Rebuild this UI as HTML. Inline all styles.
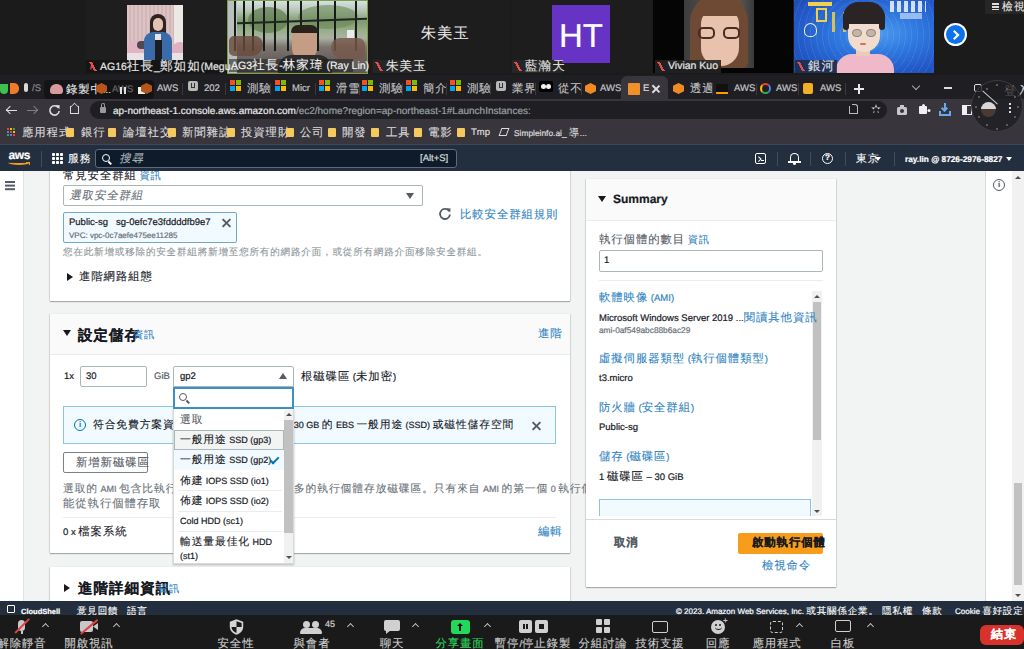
<!DOCTYPE html>
<html><head><meta charset="utf-8">
<style>
*{box-sizing:border-box;margin:0;padding:0}
html,body{text-rendering:geometricPrecision;-webkit-text-stroke:.2px currentColor;width:1024px;height:649px;overflow:hidden;background:#f2f3f3;font-family:"Liberation Sans",sans-serif;color:#16191f}
.a{position:absolute;white-space:nowrap}
.c{font-size:1.2em;letter-spacing:.08em;-webkit-text-stroke:.1px currentColor}
.lnk{color:#2f84c2}
.xx{position:absolute}.xx:before,.xx:after{content:"";position:absolute;left:50%;top:50%;width:100%;height:2px;margin-left:-50%;margin-top:-1px;background:currentColor;transform:rotate(45deg)}.xx:after{transform:rotate(-45deg)}
.card{position:absolute;background:#fff;box-shadow:0 1px 1px 0 rgba(0,0,0,.28),1px 0 1px 0 rgba(0,0,0,.08),-1px 0 1px 0 rgba(0,0,0,.08)}
.t9{font-size:9.5px;line-height:12px}
.t8{font-size:8.5px;line-height:11px}
#zoomtop{left:0;top:0;width:1024px;height:75px;background:#1b1b1b}
#tabs{left:0;top:75px;width:1024px;height:24px;background:#1f1e22}
#toolbar{left:0;top:99px;width:1024px;height:45px;background:#38353c}
#awsnav{left:0;top:144px;width:1024px;height:27px;background:#232f3e;border-top:1px solid #3f4757}
#awsfoot{left:0;top:601px;width:1024px;height:14px;background:#232f3e;overflow:hidden}
#zoombar{left:0;top:615px;width:1024px;height:34px;background:#1a1a1a}
</style></head><body>

<div id="zoomtop" class="a">
 <!-- tile2 -->
 <div class="a" style="left:86px;top:0;width:140px;height:73px;background:#1e1e1e"></div>
 <div class="a" style="left:127px;top:5px;width:56px;height:55px;background:repeating-linear-gradient(90deg,#dcc4c5 0 2px,#d2b6b8 2px 4px);overflow:hidden">
   <div class="a" style="left:47px;top:0;width:9px;height:55px;background:#ece8e4"></div>
   <div class="a" style="left:0;top:35px;width:22px;height:16px;border-radius:10px 8px 4px 4px;background:#e2b3c3"></div>
   <div class="a" style="left:45px;top:37px;width:12px;height:15px;border-radius:8px 4px 4px 4px;background:#dfb0bf"></div>
   <div class="a" style="left:10px;top:36px;width:12px;height:8px;border-radius:6px;background:#4a4a52"></div>
   <div class="a" style="left:0;top:48px;width:56px;height:7px;background:#e6e2e6"></div>
   <div class="a" style="left:23px;top:9px;width:16px;height:22px;border-radius:8px 8px 3px 3px;background:#2e2422"></div>
   <div class="a" style="left:26px;top:13px;width:10px;height:13px;border-radius:5px 5px 5px 5px;background:#e5c2b2"></div>
   <div class="a" style="left:17px;top:27px;width:28px;height:28px;border-radius:9px 9px 0 0;background:#3a6cab"></div>
   <div class="a" style="left:28px;top:29px;width:6px;height:6px;background:#e9e4e4"></div>
   <div class="a" style="left:28px;top:35px;width:7px;height:20px;background:#1c1c24"></div>
 </div>
 <div class="a" style="left:86px;top:60px;width:138px;height:13px;background:rgba(20,20,20,.85)"></div>
 <!-- tile3 -->
 <div class="a" style="left:227px;top:0;width:141px;height:74px;border:1.5px solid #7e9f4a;background:#555;overflow:hidden">
   <div class="a" style="left:0;top:0;width:141px;height:74px;background:linear-gradient(180deg,#d6e0e4 0%,#b9c8b8 12%,#7f9a70 28%,#9aae8a 40%,#a9b2a4 50%,#7d7470 62%,#6a625e 78%,#5a5654 100%)"></div>
   <div class="a" style="left:20px;top:6px;width:40px;height:26px;border-radius:50%;background:#5f7c4e;opacity:.7"></div>
   <div class="a" style="left:70px;top:4px;width:60px;height:24px;border-radius:50%;background:#6c8a58;opacity:.6"></div>
   <div class="a" style="left:0;top:0;width:9px;height:74px;background:#b8bfbc"></div>
   <div class="a" style="left:6px;top:0;width:1.5px;height:50px;background:#161b18;box-shadow:9px 0 0 #161b18,18px 0 0 #161b18,29px 0 0 #161b18,40px 0 0 #161b18,53px 0 0 #161b18,66px 0 0 #161b18,83px 0 0 #161b18,100px 0 0 #161b18,121px 0 0 #161b18"></div>
   <div class="a" style="left:9px;top:19px;width:132px;height:1.5px;background:#1f2622;transform:rotate(-2deg)"></div>
   <div class="a" style="left:1px;top:35px;width:34px;height:20px;border-radius:6px 10px 14px 6px;background:#6a4a3c;opacity:.8"></div>
   <div class="a" style="left:103px;top:37px;width:34px;height:21px;border-radius:10px 8px 6px 14px;background:#77584a;opacity:.8"></div>
   <div class="a" style="left:119px;top:29px;width:7px;height:8px;background:#e8ece8"></div>
   <div class="a" style="left:64px;top:26px;width:25px;height:32px;border-radius:11px 11px 10px 10px;background:#c59c84"></div>
   <div class="a" style="left:63px;top:24px;width:27px;height:8px;border-radius:12px 12px 2px 2px;background:#2a201c"></div>
   <div class="a" style="left:50px;top:54px;width:54px;height:22px;border-radius:14px 14px 0 0;background:#2e2b2b"></div>
 </div>
 <div class="a" style="left:229px;top:59px;width:124px;height:13px;background:rgba(30,30,30,.55)"></div>
 <!-- tile4 -->
 <div class="a" style="left:371px;top:0;width:139px;height:73px;background:#1d1d1d"></div>
 <div class="a" style="left:421px;top:25px;font-size:12.5px;color:#e8e8e8"><span class="c">朱美玉</span></div>
 <div class="a" style="left:373px;top:60px;width:50px;height:13px;background:#262626"></div>
 <!-- tile5 -->
 <div class="a" style="left:512px;top:0;width:140px;height:73px;background:#1d1d1d"></div>
 <div class="a" style="left:552px;top:5px;width:58px;height:58px;background:#6633c4"></div>
 <div class="a" style="left:559px;top:19px;font-size:33px;line-height:34px;color:#fff">HT</div>
 <div class="a" style="left:512px;top:60px;width:50px;height:13px;background:#262626"></div>
 <!-- tile6 -->
 <div class="a" style="left:653px;top:0;width:140px;height:73px;background:#050505"></div>
 <div class="a" style="left:684px;top:0;width:70px;height:68px;background:linear-gradient(90deg,#3c3c3c,#626262 70%,#3a3a3a);overflow:hidden">
   <div class="a" style="left:6px;top:-6px;width:58px;height:74px;border-radius:28px 28px 6px 6px;background:#6e4a34"></div>
   <div class="a" style="left:17px;top:8px;width:38px;height:58px;border-radius:16px 16px 18px 18px;background:#e9c2ad"></div>
   <div class="a" style="left:12px;top:0px;width:48px;height:16px;border-radius:20px 20px 6px 18px;background:#6e4a34"></div>
   <div class="a" style="left:14px;top:27px;width:17px;height:12px;border:2px solid #4a2d22;border-radius:5px"></div>
   <div class="a" style="left:39px;top:27px;width:17px;height:12px;border:2px solid #4a2d22;border-radius:5px"></div>
 </div>
 <div class="a" style="left:655px;top:60px;width:66px;height:13px;background:rgba(35,35,35,.9)"></div>
 <!-- tile7 -->
 <div class="a" style="left:794px;top:0;width:140px;height:73px;background:radial-gradient(ellipse at 60% 45%,#4c9bf0 0%,#2f78e0 35%,#2259c8 70%,#1c46a8 100%);overflow:hidden">
   <div class="a" style="left:-20px;top:-30px;width:180px;height:130px;border-radius:50%;background:repeating-radial-gradient(circle at 50% 50%,rgba(255,255,255,0) 0 5px,rgba(255,255,255,.08) 5px 6px)"></div>
   <div class="a" style="left:14px;top:2px;width:24px;height:4px;background:#f0d24a"></div>
   <div class="a" style="left:22px;top:8px;width:11px;height:14px;border:2.5px solid #f0d24a"></div>
   <div class="a" style="left:38px;top:12px;width:14px;height:20px;border-left:3px solid #e8cc48;border-right:3px solid #e8cc48;opacity:.9"></div>
   <div class="a" style="left:10px;top:23px;width:13px;height:14px;border:1.5px solid #e8ecd0;border-radius:50% 50% 40% 40%"></div>
   <div class="a" style="left:96px;top:1px;width:36px;height:11px;opacity:.85;background:repeating-linear-gradient(90deg,#f0f4ff 0 4px,transparent 4px 7px)"></div>
   <div class="a" style="left:106px;top:13px;width:22px;height:6px;background:#c8d8f8;opacity:.7"></div>
   <div class="a" style="left:42px;top:54px;width:58px;height:22px;border-radius:16px 16px 0 0;background:#f0b9c9"></div>
   <div class="a" style="left:62px;top:48px;width:14px;height:8px;background:#ecc9b8"></div>
   <div class="a" style="left:54px;top:14px;width:32px;height:38px;border-radius:14px 14px 16px 16px;background:#f2dccd"></div>
   <div class="a" style="left:49px;top:2px;width:42px;height:22px;border-radius:20px 20px 8px 8px;background:#2a2424"></div>
   <div class="a" style="left:49px;top:14px;width:6px;height:16px;border-radius:0 0 4px 4px;background:#2a2424"></div>
   <div class="a" style="left:85px;top:14px;width:6px;height:16px;border-radius:0 0 4px 4px;background:#2a2424"></div>
   <div class="a" style="left:58px;top:29px;width:10px;height:8px;border:1px solid #8a8a8a;border-radius:4px;background:rgba(120,100,90,.35)"></div>
   <div class="a" style="left:72px;top:29px;width:10px;height:8px;border:1px solid #8a8a8a;border-radius:4px;background:rgba(120,100,90,.35)"></div>
   <div class="a" style="left:66px;top:43px;width:6px;height:2px;border-radius:1px;background:#d0706a"></div>
 </div>
 <div class="a" style="left:795px;top:60px;width:42px;height:13px;background:rgba(30,40,60,.8)"></div>
 <!-- arrow -->
 <div class="a" style="left:944px;top:23px;width:23px;height:23px;border-radius:50%;background:#fff"></div>
 <div class="a" style="left:946px;top:25px;width:19px;height:19px;border-radius:50%;background:#0e72ed"></div>
 <div class="a" style="left:951px;top:30px;width:7px;height:7px;border-right:2px solid #fff;border-top:2px solid #fff;transform:translate(0px,1.5px) rotate(45deg)"></div>
 <!-- view -->
 <div class="a" style="left:985px;top:0;width:39px;height:14px;background:#262626"></div>
 <div class="a" style="left:992px;top:3px;width:7px;height:7px;background:repeating-linear-gradient(180deg,#ddd 0 2px,transparent 2px 3px)"></div>
 <div class="a" style="left:1002px;top:1px;font-size:9px;line-height:12px;color:#e8e8e8"><span class="c">檢視</span></div>
 <!-- name labels -->
 <div class="a" style="left:90px;top:62px;width:6px;height:9px;color:#e04848;font-size:9px;line-height:9px;font-weight:bold">/</div>
 <div class="a" style="left:100px;top:60px;font-size:10.5px;line-height:13px;color:#e6e6e6">AG16<span class="c">社長</span>_<span class="c">鄭如如</span>(Megu...</div>
 <div class="a" style="left:231px;top:59px;font-size:10.5px;line-height:13px;color:#f0f0f0">AG3<span class="c">社長</span>-<span class="c">林家瑋</span> (Ray Lin)</div>
 <div class="a" style="left:386px;top:60px;font-size:10.5px;line-height:13px;color:#e6e6e6"><span class="c">朱美玉</span></div>
 <div class="a" style="left:525px;top:60px;font-size:10.5px;line-height:13px;color:#e6e6e6"><span class="c">藍瀚天</span></div>
 <div class="a" style="left:668px;top:60px;font-size:10.5px;line-height:13px;color:#e6e6e6">Vivian Kuo</div>
 <div class="a" style="left:808px;top:60px;font-size:10.5px;line-height:13px;color:#e6e6e6"><span class="c">銀河</span></div>
 <div class="a" style="left:89px;top:62px;width:8px;height:9px;background:linear-gradient(60deg,transparent 40%,#e05050 40% 60%,transparent 60%)"></div>
 <div class="a" style="left:375px;top:62px;width:8px;height:9px;background:linear-gradient(60deg,transparent 40%,#e05050 40% 60%,transparent 60%)"></div>
 <div class="a" style="left:514px;top:62px;width:8px;height:9px;background:linear-gradient(60deg,transparent 40%,#e05050 40% 60%,transparent 60%)"></div>
 <div class="a" style="left:657px;top:62px;width:8px;height:9px;background:linear-gradient(60deg,transparent 40%,#e05050 40% 60%,transparent 60%)"></div>
 <div class="a" style="left:797px;top:62px;width:8px;height:9px;background:linear-gradient(60deg,transparent 40%,#e05050 40% 60%,transparent 60%)"></div>
</div>

<div id="tabs" class="a"></div>
<div class="a" style="left:0px;top:84px;width:8px;height:10px;background:#3fc14f;border-radius:0 0 5px 5px"></div>
<div class="a" style="left:10px;top:83px;width:9px;height:11px;background:#ee7a2a;border-radius:0 5px 5px 0"></div>
<div class="a" style="left:24px;top:83px;width:4px;height:9px;background:#d8d8d8;border-radius:2px"></div>
<div class="a" style="left:32px;top:83px;font-size:9.5px;line-height:12px;color:#888">/S</div>
<div class="a" style="left:44px;top:80px;width:110px;height:19px;background:#141416;border-radius:4px"></div>
<div class="a" style="left:50px;top:84px;width:13px;height:10px;background:#d89a9a;border-radius:6px 6px 3px 3px"></div>
<div class="a" style="left:66px;top:84px;font-size:9.5px;line-height:12px;color:#e6e6e6"><span class="c">錄製中</span>...</div>
<div class="a" style="left:96px;top:83px;width:11px;height:11px;background:#b5561c;clip-path:polygon(50% 0,100% 25%,100% 75%,50% 100%,0 75%,0 25%)"></div>
<div class="a" style="left:112px;top:84px;font-size:9.5px;line-height:12px;color:#666">AWS</div>
<div class="a" style="left:120px;top:87px;width:2px;height:7px;background:#e0e0e0;box-shadow:4px 0 0 #e0e0e0"></div>
<div class="a" style="left:138px;top:87px;width:7px;height:7px;background:#f0f0f0"></div>
<div class="a" style="left:141px;top:83px;width:11px;height:11px;background:#b5561c;clip-path:polygon(50% 0,100% 25%,100% 75%,50% 100%,0 75%,0 25%)"></div>
<div class="a" style="left:157px;top:83px;font-size:9.5px;line-height:12px;color:#c4c4c8">AWS</div>
<div class="a" style="left:182px;top:83px;width:1px;height:12px;background:#3a393e"></div>
<div class="a" style="left:188px;top:81px;width:10px;height:10px;background:#b8b8b8;border-radius:2px"></div><div class="a" style="left:191px;top:83px;width:4px;height:5px;border:1.3px solid #333;border-top:0"></div>
<div class="a" style="left:204px;top:83px;font-size:9.5px;line-height:12px;color:#c4c4c8">202</div>
<div class="a" style="left:225px;top:83px;width:1px;height:12px;background:#3a393e"></div>
<div class="a" style="left:230px;top:80px;width:11px;height:11px;background:linear-gradient(90deg,transparent 5px,#1f1e22 5px 6px,transparent 6px),linear-gradient(0deg,transparent 5px,#1f1e22 5px 6px,transparent 6px),linear-gradient(90deg,#f25022 50%,#7fba00 50%) top/100% 50% no-repeat,linear-gradient(90deg,#00a4ef 50%,#ffb900 50%) bottom/100% 50% no-repeat"></div>
<div class="a" style="left:247px;top:83px;font-size:9.5px;line-height:12px;color:#c4c4c8"><span class="c">測驗</span></div>
<div class="a" style="left:270px;top:83px;width:1px;height:12px;background:#3a393e"></div>
<div class="a" style="left:275px;top:80px;width:11px;height:11px;background:linear-gradient(90deg,transparent 5px,#1f1e22 5px 6px,transparent 6px),linear-gradient(0deg,transparent 5px,#1f1e22 5px 6px,transparent 6px),linear-gradient(90deg,#f25022 50%,#7fba00 50%) top/100% 50% no-repeat,linear-gradient(90deg,#00a4ef 50%,#ffb900 50%) bottom/100% 50% no-repeat"></div>
<div class="a" style="left:292px;top:83px;font-size:9.5px;line-height:12px;color:#c4c4c8">Micr</div>
<div class="a" style="left:315px;top:83px;width:1px;height:12px;background:#3a393e"></div>
<div class="a" style="left:319px;top:80px;width:11px;height:11px;background:linear-gradient(90deg,transparent 5px,#1f1e22 5px 6px,transparent 6px),linear-gradient(0deg,transparent 5px,#1f1e22 5px 6px,transparent 6px),linear-gradient(90deg,#f25022 50%,#7fba00 50%) top/100% 50% no-repeat,linear-gradient(90deg,#00a4ef 50%,#ffb900 50%) bottom/100% 50% no-repeat"></div>
<div class="a" style="left:336px;top:83px;font-size:9.5px;line-height:12px;color:#c4c4c8"><span class="c">滑雪</span></div>
<div class="a" style="left:359px;top:83px;width:1px;height:12px;background:#3a393e"></div>
<div class="a" style="left:362px;top:80px;width:11px;height:11px;background:linear-gradient(90deg,transparent 5px,#1f1e22 5px 6px,transparent 6px),linear-gradient(0deg,transparent 5px,#1f1e22 5px 6px,transparent 6px),linear-gradient(90deg,#f25022 50%,#7fba00 50%) top/100% 50% no-repeat,linear-gradient(90deg,#00a4ef 50%,#ffb900 50%) bottom/100% 50% no-repeat"></div>
<div class="a" style="left:379px;top:83px;font-size:9.5px;line-height:12px;color:#c4c4c8"><span class="c">測驗</span></div>
<div class="a" style="left:402px;top:83px;width:1px;height:12px;background:#3a393e"></div>
<div class="a" style="left:406px;top:80px;width:11px;height:11px;background:linear-gradient(90deg,transparent 5px,#1f1e22 5px 6px,transparent 6px),linear-gradient(0deg,transparent 5px,#1f1e22 5px 6px,transparent 6px),linear-gradient(90deg,#f25022 50%,#7fba00 50%) top/100% 50% no-repeat,linear-gradient(90deg,#00a4ef 50%,#ffb900 50%) bottom/100% 50% no-repeat"></div>
<div class="a" style="left:423px;top:83px;font-size:9.5px;line-height:12px;color:#c4c4c8"><span class="c">簡介</span></div>
<div class="a" style="left:446px;top:83px;width:1px;height:12px;background:#3a393e"></div>
<div class="a" style="left:450px;top:80px;width:11px;height:11px;background:linear-gradient(90deg,transparent 5px,#1f1e22 5px 6px,transparent 6px),linear-gradient(0deg,transparent 5px,#1f1e22 5px 6px,transparent 6px),linear-gradient(90deg,#f25022 50%,#7fba00 50%) top/100% 50% no-repeat,linear-gradient(90deg,#00a4ef 50%,#ffb900 50%) bottom/100% 50% no-repeat"></div>
<div class="a" style="left:467px;top:83px;font-size:9.5px;line-height:12px;color:#c4c4c8"><span class="c">測驗</span></div>
<div class="a" style="left:490px;top:83px;width:1px;height:12px;background:#3a393e"></div>
<div class="a" style="left:496px;top:81px;width:10px;height:10px;background:#b8b8b8;border-radius:2px"></div><div class="a" style="left:499px;top:83px;width:4px;height:5px;border:1.3px solid #333;border-top:0"></div>
<div class="a" style="left:512px;top:83px;font-size:9.5px;line-height:12px;color:#c4c4c8"><span class="c">業界</span></div>
<div class="a" style="left:535px;top:83px;width:1px;height:12px;background:#3a393e"></div>
<div class="a" style="left:539px;top:81px;width:14px;height:11px;background:#000;border-radius:2px"></div><div class="a" style="left:541px;top:84px;width:5px;height:5px;border-radius:50%;background:#f4f4f4;box-shadow:5px 0 0 #f4f4f4"></div>
<div class="a" style="left:558px;top:83px;font-size:9.5px;line-height:12px;color:#c4c4c8"><span class="c">從不</span></div>
<div class="a" style="left:581px;top:83px;width:1px;height:12px;background:#3a393e"></div>
<div class="a" style="left:585px;top:83px;width:11px;height:11px;background:#f08a24;clip-path:polygon(50% 0,100% 25%,100% 75%,50% 100%,0 75%,0 25%)"></div>
<div class="a" style="left:600px;top:83px;font-size:9.5px;line-height:12px;color:#c4c4c8">AWS</div>
<div class="a" style="left:621px;top:76px;width:47px;height:24px;background:#38353c;border-radius:6px 6px 0 0"></div>
<div class="a" style="left:628px;top:83px;width:12px;height:12px;background:#f0902a;border-radius:1px"></div>
<div class="a" style="left:643px;top:83px;font-size:9.5px;line-height:12px;color:#ddd">E</div>
<div class="a" style="left:655px;top:84px;width:1.5px;height:10px;background:#ddd;transform:rotate(45deg);box-shadow:0 0 0 0 #ddd"></div><div class="a" style="left:655px;top:84px;width:1.5px;height:10px;background:#ddd;transform:rotate(-45deg)"></div>
<div class="a" style="left:673px;top:83px;width:11px;height:11px;background:#f08a24;clip-path:polygon(50% 0,100% 25%,100% 75%,50% 100%,0 75%,0 25%)"></div>
<div class="a" style="left:690px;top:83px;font-size:9.5px;line-height:12px;color:#c4c4c8"><span class="c">透過</span></div>
<div class="a" style="left:712px;top:83px;width:1px;height:12px;background:#3a393e"></div>
<div class="a" style="left:716px;top:84px;width:12px;height:10px;background:#111;border-bottom:2px solid #f90"></div>
<div class="a" style="left:734px;top:83px;font-size:9.5px;line-height:12px;color:#c4c4c8">AWS</div>
<div class="a" style="left:756px;top:83px;width:1px;height:12px;background:#3a393e"></div>
<div class="a" style="left:760px;top:83px;width:11px;height:11px;border-radius:50%;border:2.5px solid #4285f4;border-top-color:#ea4335;border-left-color:#fbbc05;border-bottom-color:#34a853"></div>
<div class="a" style="left:776px;top:83px;font-size:9.5px;line-height:12px;color:#c4c4c8">AWS</div>
<div class="a" style="left:798px;top:83px;width:1px;height:12px;background:#3a393e"></div>
<div class="a" style="left:803px;top:83px;width:10px;height:11px;background:#f2b024;border-radius:2px"></div>
<div class="a" style="left:820px;top:83px;font-size:9.5px;line-height:12px;color:#c4c4c8">AWS</div>
<div class="a" style="left:845px;top:83px;width:1px;height:12px;background:#3a393e"></div>
<div class="a" style="left:854px;top:88px;width:10px;height:2px;background:#e8e8e8"></div><div class="a" style="left:858px;top:84px;width:2px;height:10px;background:#e8e8e8"></div>
<div class="a" style="left:913px;top:83px;width:6px;height:6px;border-right:1.5px solid #aaa;border-bottom:1.5px solid #aaa;transform:rotate(45deg)"></div>
<div class="a" style="left:944px;top:87px;width:8px;height:1.5px;background:#ddd"></div>
<div class="a" style="left:974px;top:84px;width:8px;height:8px;border:1.5px solid #ddd;border-radius:2px"></div>
<div class="a" style="left:1004px;top:85px;font-size:10px;line-height:12px;color:#ddd"><span class="c">登入</span></div>
<div id="toolbar" class="a"></div>
<div class="a" style="left:6px;top:109.5px;width:11px;height:1.6px;background:#e0e0e0"></div><div class="a" style="left:7px;top:106px;width:6px;height:6px;border-left:1.6px solid #e0e0e0;border-bottom:1.6px solid #e0e0e0;transform:translate(0,1px) rotate(45deg)"></div>
<div class="a" style="left:27px;top:109.5px;width:11px;height:1.6px;background:#808080"></div><div class="a" style="left:31px;top:106px;width:6px;height:6px;border-right:1.6px solid #808080;border-top:1.6px solid #808080;transform:translate(0,1px) rotate(45deg)"></div>
<svg class="a" style="left:48px;top:104px" width="13" height="13" viewBox="0 0 14 14"><path d="M11.2 4.2 A5 5 0 1 0 12 7.5" fill="none" stroke="#e0e0e0" stroke-width="1.7"/><path d="M8.3 1.2 L12.6 1.4 L12.2 5.6 Z" fill="#e0e0e0"/></svg>
<div class="a" style="left:70px;top:106px;width:9px;height:8px;border:1.5px solid #ddd;border-top:0"></div><div class="a" style="left:70px;top:102px;width:9px;height:9px;border-left:1.5px solid #ddd;border-top:1.5px solid #ddd;transform:translate(0,1px) rotate(45deg) scale(.75)"></div>
<div class="a" style="left:90px;top:101px;width:797px;height:18px;background:#1f1e22;border-radius:9px"></div>
<div class="a" style="left:100px;top:107px;width:6px;height:6px;background:#9a9a9a;border-radius:1px"></div><div class="a" style="left:101px;top:103px;width:4px;height:5px;border:1.2px solid #9a9a9a;border-bottom:0;border-radius:2px 2px 0 0"></div>
<div class="a" style="left:113px;top:105.5px;font-size:10px;line-height:12px;color:#e8e8ea">ap-northeast-1.console.aws.amazon.com<span style="color:#9aa0a6">/ec2/home?region=ap-northeast-1#LaunchInstances:</span></div>
<div class="a" style="left:849px;top:106px;width:9px;height:8px;border:1.3px solid #bbb;border-top:0;border-radius:0 0 1px 1px"></div><div class="a" style="left:852px;top:104px;width:6px;height:5px;border-top:1.3px solid #bbb;border-right:1.3px solid #bbb;border-radius:0 3px 0 0"></div>
<div class="a" style="left:871px;top:104px;width:10px;height:10px;background:#ddd;clip-path:polygon(50% 0,61% 36%,98% 36%,68% 58%,79% 92%,50% 71%,21% 92%,32% 58%,2% 36%,39% 36%)"></div><div class="a" style="left:873.5px;top:107px;width:5px;height:5px;background:#202023;clip-path:polygon(50% 0,100% 40%,80% 100%,20% 100%,0 40%)"></div>
<div class="a" style="left:897px;top:107px;width:10px;height:8px;background:#c8c8c8;border-radius:1.5px"></div><div class="a" style="left:900px;top:105px;width:4px;height:3px;background:#c8c8c8"></div><div class="a" style="left:900px;top:109px;width:4px;height:4px;border-radius:50%;background:#343338"></div>
<div class="a" style="left:919px;top:106px;width:8px;height:8px;background:#f0f0f0;border-radius:1px"></div><div class="a" style="left:921.5px;top:103.5px;width:3px;height:3px;background:#f0f0f0;border-radius:50%;box-shadow:5.5px 5px 0 #f0f0f0"></div>
<div class="a" style="left:944px;top:103px;width:2px;height:7px;background:#6aa8f2"></div><div class="a" style="left:941.5px;top:106px;width:5px;height:5px;border-right:2px solid #6aa8f2;border-bottom:2px solid #6aa8f2;transform:rotate(45deg)"></div><div class="a" style="left:939px;top:111px;width:12px;height:5px;border:2px solid #6aa8f2;border-top:0"></div>
<div class="a" style="left:962px;top:105px;width:10px;height:10px;border:1.5px solid #f0f0f0;border-left-width:5px"></div>
<div class="a" style="left:971px;top:80px;width:52px;height:52px;border-radius:50%;background:rgba(30,30,34,.8);border:1px solid #3c3c40"></div><div class="a" style="left:996px;top:84px;width:2px;height:2px;background:#5a5a5e;box-shadow:-10px 4px 0 #5a5a5e,10px 4px 0 #5a5a5e,-18px 12px 0 #5a5a5e,18px 12px 0 #5a5a5e,-21px 22px 0 #5a5a5e,21px 22px 0 #5a5a5e,-18px 32px 0 #5a5a5e,18px 32px 0 #5a5a5e,-10px 40px 0 #5a5a5e,10px 40px 0 #5a5a5e,0 44px 0 #5a5a5e"></div>
<div class="a" style="left:981px;top:102px;width:15px;height:15px;border-radius:50%;background:linear-gradient(180deg,#d8d8d8 45%,#4a3a34 45%)"></div>
<div class="a" style="left:980px;top:97px;width:20px;height:1.2px;background:#ccc;transform:rotate(42deg)"></div>
<div class="a" style="left:1009px;top:103px;width:2px;height:2px;background:#ddd;box-shadow:0 4px 0 #ddd,0 8px 0 #ddd"></div>
<div class="a" style="left:7px;top:128px;width:2px;height:2px;background:#ea4335;box-shadow:3px 0 0 #fbbc05,6px 0 0 #34a853,0 3px 0 #4285f4,3px 3px 0 #ea4335,6px 3px 0 #fbbc05,0 6px 0 #34a853,3px 6px 0 #4285f4,6px 6px 0 #ea4335"></div>
<div class="a" style="left:22px;top:127px;font-size:9.5px;line-height:12px;color:#ddd"><span class="c">應用程式</span></div>
<div class="a" style="left:66px;top:128px;width:8px;height:9px;background:#f4c95d;border-radius:1px"></div>
<div class="a" style="left:81px;top:127px;font-size:9.5px;line-height:12px;color:#ddd"><span class="c">銀行</span></div>
<div class="a" style="left:108px;top:128px;width:8px;height:9px;background:#f4c95d;border-radius:1px"></div>
<div class="a" style="left:123px;top:127px;font-size:9.5px;line-height:12px;color:#ddd"><span class="c">論壇社交</span></div>
<div class="a" style="left:168px;top:128px;width:8px;height:9px;background:#f4c95d;border-radius:1px"></div>
<div class="a" style="left:182px;top:127px;font-size:9.5px;line-height:12px;color:#ddd"><span class="c">新聞雜誌</span></div>
<div class="a" style="left:227px;top:128px;width:8px;height:9px;background:#f4c95d;border-radius:1px"></div>
<div class="a" style="left:241px;top:127px;font-size:9.5px;line-height:12px;color:#ddd"><span class="c">投資理財</span></div>
<div class="a" style="left:286px;top:128px;width:8px;height:9px;background:#f4c95d;border-radius:1px"></div>
<div class="a" style="left:300px;top:127px;font-size:9.5px;line-height:12px;color:#ddd"><span class="c">公司</span></div>
<div class="a" style="left:328px;top:128px;width:8px;height:9px;background:#f4c95d;border-radius:1px"></div>
<div class="a" style="left:342px;top:127px;font-size:9.5px;line-height:12px;color:#ddd"><span class="c">開發</span></div>
<div class="a" style="left:371px;top:128px;width:8px;height:9px;background:#f4c95d;border-radius:1px"></div>
<div class="a" style="left:386px;top:127px;font-size:9.5px;line-height:12px;color:#ddd"><span class="c">工具</span></div>
<div class="a" style="left:414px;top:128px;width:8px;height:9px;background:#f4c95d;border-radius:1px"></div>
<div class="a" style="left:428px;top:127px;font-size:9.5px;line-height:12px;color:#ddd"><span class="c">電影</span></div>
<div class="a" style="left:457px;top:128px;width:8px;height:9px;background:#f4c95d;border-radius:1px"></div>
<div class="a" style="left:471px;top:127px;font-size:9.5px;line-height:12px;color:#ddd">Tmp</div>
<div class="a" style="left:500px;top:128px;width:8px;height:8px;border:1.2px solid #ddd;transform:skew(-20deg)"></div>
<div class="a" style="left:514px;top:127px;font-size:8.4px;line-height:12px;color:#ddd">Simpleinfo.ai_ <span class="c">導</span>...</div>

<!-- CONTENT -->
<div class="a" style="left:0;top:171px;width:24px;height:430px;background:#fff;border-right:1px solid #e2e4e4"></div>
<div class="a" style="left:5px;top:181px;width:9.5px;height:1.6px;background:#545b64;box-shadow:0 3.6px 0 #545b64,0 7.2px 0 #545b64"></div>
<div class="a" style="left:985px;top:171px;width:27px;height:430px;background:#fff;border-left:1px solid #d5dbdb"></div>
<div class="a" style="left:993px;top:179px;width:12px;height:12px;border:1.5px solid #545b64;border-radius:50%;font-size:8px;font-weight:bold;color:#545b64;text-align:center;line-height:9px">i</div>
<div class="a" style="left:1012px;top:171px;width:12px;height:430px;background:#f1f1f1"></div>
<div class="a" style="left:1014px;top:483px;width:8px;height:102px;background:#c1c1c1"></div>
<div class="a" style="left:1015px;top:176px;width:0;height:0;border-left:3px solid transparent;border-right:3px solid transparent;border-bottom:3px solid #505050"></div>
<div class="a" style="left:1015px;top:594px;width:0;height:0;border-left:3px solid transparent;border-right:3px solid transparent;border-top:3px solid #505050"></div>

<!-- card 1 -->
<div class="card" style="left:50px;top:150px;width:520px;height:151px"></div>
<div class="a t9" style="left:63px;top:170px;color:#16191f"><span class="c">常見安全群組</span> <span class="lnk t8"><span class="c">資訊</span></span></div>
<div class="a" style="left:63px;top:185px;width:360px;height:21px;border:1px solid #aab7b8;border-radius:2px;background:#fff"></div>
<div class="a t9" style="left:70px;top:190px;color:#687078;transform:skewX(-12deg)"><span class="c">選取安全群組</span></div>
<div class="a" style="left:406px;top:193px;border-left:4px solid transparent;border-right:4px solid transparent;border-top:6px solid #545b64"></div>
<div class="a" style="left:63px;top:212px;width:174px;height:31px;border:1px solid #6fa9cf;border-radius:2px;background:#f1faff"></div>
<div class="a t9" style="left:69px;top:217px;color:#16191f">Public-sg&nbsp;&nbsp; sg-0efc7e3fddddfb9e7</div>
<div class="xx" style="left:221px;top:217px;width:11px;height:11px;color:#545b64"></div>
<div class="a" style="left:69px;top:231px;font-size:8px;line-height:10px;color:#687078">VPC: vpc-0c7aefe475ee11285</div>
<svg class="a" style="left:438px;top:207px" width="14" height="14" viewBox="0 0 14 14"><path d="M11.2 4.2 A5 5 0 1 0 12 7.5" fill="none" stroke="#545b64" stroke-width="1.8"/><path d="M8.3 1.2 L12.6 1.4 L12.2 5.6 Z" fill="#545b64"/></svg>
<div class="a t9" style="left:460px;top:209px;color:#2f84c2"><span class="c">比較安全群組規則</span></div>
<div class="a" style="left:63px;top:248px;font-size:8px;line-height:10px;color:#8d9599"><span class="c">您在此新增或移除的安全群組將新增至您所有的網路介面，或從所有網路介面移除安全群組。</span></div>
<div class="a" style="left:67px;top:273px;border-top:4px solid transparent;border-bottom:4px solid transparent;border-left:6px solid #16191f"></div>
<div class="a t9" style="left:79px;top:271px;color:#16191f"><span class="c">進階網路組態</span></div>

<!-- card 2 -->
<div class="card" style="left:50px;top:314px;width:520px;height:239px"></div>
<div class="a" style="left:50px;top:314px;width:520px;height:41px;background:#fafafa;border-bottom:1px solid #eaeded"></div>
<div class="a" style="left:63px;top:330px;border-left:4px solid transparent;border-right:4px solid transparent;border-top:6px solid #16191f"></div>
<div class="a" style="left:78px;top:327px;font-size:12px;font-weight:bold;color:#16191f"><span class="c">設定儲存</span></div>
<div class="a t8" style="left:133px;top:330px;color:#2f84c2"><span class="c">資訊</span></div>
<div class="a t9" style="left:538px;top:328px;color:#2f84c2"><span class="c">進階</span></div>
<div class="a t9" style="left:64px;top:371px;color:#16191f">1x</div>
<div class="a" style="left:80px;top:366px;width:67px;height:21px;border:1px solid #aab7b8;border-radius:2px;background:#fff"></div>
<div class="a t9" style="left:86px;top:371px">30</div>
<div class="a t9" style="left:154px;top:371px;color:#545b64">GiB</div>
<div class="a t9" style="left:301px;top:371px;color:#16191f"><span class="c">根磁碟區</span> (<span class="c">未加密</span>)</div>
<!-- alert -->
<div class="a" style="left:63px;top:406px;width:493px;height:38px;background:#f1faff;border:1px solid #0073bb;border-color:#8cc4e3"></div>
<div class="a" style="left:74px;top:419px;width:12px;height:12px;border:1.5px solid #0073bb;border-radius:50%;font-size:8px;font-weight:bold;color:#2f84c2;text-align:center;line-height:9px">i</div>
<div class="a t9" style="font-size:9px;left:93px;top:419px;color:#16191f"><span class="c">符合免費方案資格的客戶最多可以獲得</span> 30 GB <span class="c">的</span> EBS <span class="c">一般用途</span> (SSD) <span class="c">或磁性儲存空間</span></div>
<div class="xx" style="left:531px;top:420px;width:11px;height:11px;color:#545b64"></div>
<div class="a" style="left:63px;top:452px;width:85px;height:21px;border:1px solid #79828a;border-radius:2px;background:#fff"></div>
<div class="a t9" style="left:76px;top:457px;color:#545b64"><span class="c">新增新磁碟區</span></div>
<div class="a t9" style="font-size:9px;left:63px;top:483px;color:#6b737a"><span class="c">選取的</span> AMI <span class="c">包含比執行個體允許的數量還要更多的執行個體存放磁碟區。只有來自</span> AMI <span class="c">的第一個</span> 0 <span class="c">執行個體存放磁碟區才</span></div>
<div class="a t9" style="left:63px;top:498px;color:#6b737a"><span class="c">能從執行個體存取</span></div>
<div class="a" style="left:63px;top:517px;width:493px;height:1px;background:#eaeded"></div>
<div class="a t9" style="left:63px;top:526px;color:#16191f">0 x <span class="c">檔案系統</span></div>
<div class="a t9" style="left:538px;top:526px;color:#2f84c2"><span class="c">編輯</span></div>

<!-- card 3 -->
<div class="card" style="left:50px;top:567px;width:520px;height:60px"></div>
<div class="a" style="left:64px;top:583.5px;border-top:4px solid transparent;border-bottom:4px solid transparent;border-left:6px solid #16191f"></div>
<div class="a" style="left:78px;top:579.5px;font-size:12px;font-weight:bold;color:#16191f"><span class="c">進階詳細資訊</span></div>
<div class="a t8" style="left:158px;top:583.5px;color:#2f84c2"><span class="c">資訊</span></div>

<!-- summary -->
<div class="card" style="left:586px;top:179px;width:250px;height:408px"></div>
<div class="a" style="left:586px;top:179px;width:250px;height:42px;background:#fafafa;border-bottom:1px solid #eaeded"></div>
<div class="a" style="left:598px;top:196px;border-left:4px solid transparent;border-right:4px solid transparent;border-top:6px solid #16191f"></div>
<div class="a" style="left:613px;top:192px;font-size:12px;font-weight:bold;color:#16191f">Summary</div>
<div class="a t9" style="left:599px;top:234px;color:#545b64"><span class="c">執行個體的數目</span> <span class="t8 lnk"><span class="c">資訊</span></span></div>
<div class="a" style="left:599px;top:250px;width:224px;height:22px;border:1px solid #aab7b8;border-radius:2px;background:#fff"></div>
<div class="a t9" style="left:604px;top:255px">1</div>
<div class="a" style="left:599px;top:280px;width:224px;height:1px;background:#eaeded"></div>
<!-- scroll area -->
<div class="a" style="left:812px;top:291px;width:10px;height:225px;background:#f1f1f1"></div>
<div class="a" style="left:813px;top:302px;width:8px;height:138px;background:#c1c1c1"></div>
<div class="a" style="left:814px;top:295px;border-left:3px solid transparent;border-right:3px solid transparent;border-bottom:3px solid #505050"></div>
<div class="a" style="left:814px;top:510px;border-left:3px solid transparent;border-right:3px solid transparent;border-top:3px solid #505050"></div>
<div class="a t9" style="left:599px;top:292px;color:#2f84c2"><span class="c">軟體映像</span> (AMI)</div>
<div class="a t9" style="left:599px;top:311.5px;color:#16191f">Microsoft Windows Server 2019 ...<span class="lnk"><span class="c">閱讀其他資訊</span></span></div>
<div class="a t8" style="font-size:8.3px;left:599px;top:325px;color:#687078">ami-0af549abc88b6ac29</div>
<div class="a t9" style="left:599px;top:352.5px;color:#2f84c2"><span class="c">虛擬伺服器類型</span> (<span class="c">執行個體類型</span>)</div>
<div class="a t9" style="left:599px;top:372.5px;color:#16191f">t3.micro</div>
<div class="a t9" style="left:599px;top:401.5px;color:#2f84c2"><span class="c">防火牆</span> (<span class="c">安全群組</span>)</div>
<div class="a t9" style="left:599px;top:422px;color:#16191f">Public-sg</div>
<div class="a t9" style="left:599px;top:451px;color:#2f84c2"><span class="c">儲存</span> (<span class="c">磁碟區</span>)</div>
<div class="a t9" style="left:599px;top:471px;color:#16191f">1 <span class="c">磁碟區</span> – 30 GiB</div>
<div class="a" style="left:599px;top:499px;width:212px;height:30px;border:1px solid #8cc4e3;background:#f1faff;clip-path:inset(0 0 13px 0)"></div>
<div class="a" style="left:586px;top:519px;width:250px;height:1px;background:#d5dbdb"></div>
<div class="a t9" style="left:614px;top:537px;color:#545b64;font-weight:bold"><span class="c">取消</span></div>
<div class="a" style="left:738px;top:533px;width:85px;height:21px;background:#ec7211;background:#f89c1c;border-radius:2px"></div>
<div class="a t9" style="left:752px;top:537px;color:#16191f;font-weight:bold"><span class="c">啟動執行個體</span></div>
<div class="a t9" style="left:762px;top:560px;color:#2f84c2"><span class="c">檢視命令</span></div>

<!-- dropdown -->
<div class="a" style="left:173px;top:366px;width:121px;height:21px;border:1px solid #aab7b8;border-radius:2px 2px 0 0;background:#fff"></div>
<div class="a t9" style="left:180px;top:371px">gp2</div>
<div class="a" style="left:279px;top:373px;border-left:4px solid transparent;border-right:4px solid transparent;border-bottom:6px solid #545b64"></div>
<div class="a" style="left:173px;top:387px;width:121px;height:22px;border:2px solid #0073bb;border-color:#3d8fc7;background:#fff"></div>
<div class="a" style="left:179px;top:393px;width:8px;height:8px;border:1.5px solid #545b64;border-radius:50%"></div>
<div class="a" style="left:186px;top:401px;width:4px;height:1.5px;background:#545b64;transform:rotate(45deg)"></div>
<div class="a" style="left:173px;top:409px;width:121px;height:155px;background:#fff;border:1px solid #d5dbdb;border-top:0;box-shadow:0 1px 2px rgba(0,0,0,.25)"></div>
<div class="a t9" style="font-size:9px;left:180px;top:413.5px;color:#545b64"><span class="c">選取</span></div>
<div class="a" style="left:174px;top:430px;width:110px;height:20px;background:#f2f3f3;border:1px solid #aab7b8"></div>
<div class="a t9" style="font-size:9px;left:180px;top:434px;color:#16191f"><span class="c">一般用途</span> SSD (gp3)</div>
<div class="a" style="left:174px;top:450px;width:110px;height:20px;background:#f1faff"></div>
<div class="a t9" style="font-size:9px;left:180px;top:454px;color:#16191f"><span class="c">一般用途</span> SSD (gp2)</div>
<div class="a" style="left:272px;top:455px;width:5px;height:9px;border-right:2px solid #0073bb;border-bottom:2px solid #0073bb;transform:rotate(45deg)"></div>
<div class="a" style="left:178px;top:490px;width:104px;height:1px;background:#eaeded"></div>
<div class="a" style="left:178px;top:511px;width:104px;height:1px;background:#eaeded"></div>
<div class="a" style="left:178px;top:531px;width:104px;height:1px;background:#eaeded"></div>
<div class="a t9" style="font-size:9px;left:180px;top:475px;color:#16191f"><span class="c">佈建</span> IOPS SSD (io1)</div>
<div class="a t9" style="font-size:9px;left:180px;top:495px;color:#16191f"><span class="c">佈建</span> IOPS SSD (io2)</div>
<div class="a t9" style="font-size:9px;left:180px;top:515px;color:#16191f">Cold HDD (sc1)</div>
<div class="a t9" style="font-size:9px;left:180px;top:536px;color:#16191f"><span class="c">輸送量最佳化</span> HDD</div>
<div class="a t9" style="font-size:9px;left:180px;top:550px;color:#16191f">(st1)</div>
<div class="a" style="left:284px;top:410px;width:9px;height:153px;background:#f1f1f1"></div>
<div class="a" style="left:284px;top:420px;width:9px;height:113px;background:#c1c1c1"></div>
<div class="a" style="left:286px;top:413px;border-left:3px solid transparent;border-right:3px solid transparent;border-bottom:3px solid #505050"></div>
<div class="a" style="left:286px;top:556px;border-left:3px solid transparent;border-right:3px solid transparent;border-top:3px solid #505050"></div>

<div id="awsnav" class="a">
 <div class="a" style="left:8.5px;top:4px;font-size:12px;line-height:12px;font-weight:bold;color:#fff;letter-spacing:-.4px">aws</div>
 <div class="a" style="left:8px;top:15px;width:22px;height:5px;border-bottom:2px solid #f29a1a;border-radius:0 0 50% 50%"></div><div class="a" style="left:26px;top:16.5px;width:4px;height:3px;border-top:1.5px solid #f29a1a;border-right:1.5px solid #f29a1a"></div>
 <div class="a" style="left:41px;top:6px;width:1px;height:16px;background:#414d5c"></div>
 <div class="a" style="left:52px;top:8px;width:3px;height:3px;border-radius:.8px;background:#fff;box-shadow:4px 0 0 #fff,8px 0 0 #fff,0 4px 0 #fff,4px 4px 0 #fff,8px 4px 0 #fff,0 8px 0 #fff,4px 8px 0 #fff,8px 8px 0 #fff"></div>
 <div class="a" style="left:68px;top:8px;font-size:9px;line-height:12px;color:#fff"><span class="c">服務</span></div>
 <div class="a" style="left:95px;top:4px;width:362px;height:19px;background:#0f1b2a;border:1px solid #5f6b7a;border-radius:3px"></div>
 <div class="a" style="left:102px;top:9px;width:8px;height:8px;border:1.5px solid #fff;border-radius:50%"></div>
 <div class="a" style="left:108px;top:17px;width:4px;height:1.5px;background:#fff;transform:rotate(45deg)"></div>
 <div class="a" style="left:120px;top:8px;font-size:9.5px;line-height:12px;color:#aab7b8;transform:skewX(-12deg)"><span class="c">搜尋</span></div>
 <div class="a" style="left:420px;top:8px;font-size:9.5px;line-height:12px;color:#d5dbdb">[Alt+S]</div>
 <div class="a" style="left:755px;top:8px;width:11px;height:11px;border:1.5px solid #fff;border-radius:2px"></div><div class="a" style="left:756.5px;top:11.5px;width:3.5px;height:3.5px;border-right:1.3px solid #fff;border-top:1.3px solid #fff;transform:rotate(45deg)"></div><div class="a" style="left:761px;top:15px;width:3px;height:1.3px;background:#fff"></div>
 <div class="a" style="left:777px;top:7px;width:1px;height:14px;background:#414d5c"></div>
 <div class="a" style="left:790px;top:8px;width:9px;height:9px;border:1.5px solid #fff;border-bottom:0;border-radius:5px 5px 0 0"></div><div class="a" style="left:788px;top:16px;width:13px;height:1.5px;background:#fff"></div><div class="a" style="left:793px;top:17.5px;width:3px;height:2px;border-radius:0 0 2px 2px;background:#fff"></div>
 <div class="a" style="left:810px;top:7px;width:1px;height:14px;background:#414d5c"></div>
 <div class="a" style="left:822px;top:8px;width:11px;height:11px;border:1.5px solid #fff;border-radius:50%;font-size:8px;line-height:8px;text-align:center;color:#fff;font-weight:bold">?</div>
 <div class="a" style="left:845px;top:7px;width:1px;height:14px;background:#414d5c"></div>
 <div class="a" style="left:856px;top:8px;font-size:9px;line-height:12px;color:#fff"><span class="c">東京</span></div>
 <div class="a" style="left:875px;top:12px;border-left:3px solid transparent;border-right:3px solid transparent;border-top:4px solid #fff"></div>
 <div class="a" style="left:894px;top:7px;width:1px;height:14px;background:#414d5c"></div>
 <div class="a" style="left:905px;top:8px;font-size:8.3px;line-height:12px;color:#fff;font-weight:bold">ray.lin @ 8726-2976-8827</div>
 <div class="a" style="left:1006px;top:12px;border-left:3px solid transparent;border-right:3px solid transparent;border-top:4px solid #fff"></div>
</div>
<div id="awsfoot" class="a">
 <div class="a" style="left:7px;top:4px;width:8px;height:8px;border:1.3px solid #fff;border-radius:1px"></div>
 <div class="a" style="left:21px;top:5px;font-size:7.5px;line-height:11px;color:#fff;font-weight:bold">CloudShell</div>
 <div class="a" style="left:77px;top:5px;font-size:8px;line-height:11px;color:#fff"><span class="c">意見回饋</span></div>
 <div class="a" style="left:127px;top:5px;font-size:8px;line-height:11px;color:#fff"><span class="c">語言</span></div>
 <div class="a" style="left:676px;top:5px;font-size:8px;line-height:11px;color:#fff">© 2023. Amazon Web Services, Inc. <span class="c">或其關係企業。</span></div>
 <div class="a" style="left:882px;top:5px;font-size:8px;line-height:11px;color:#fff"><span class="c">隱私權</span></div>
 <div class="a" style="left:922px;top:5px;font-size:8px;line-height:11px;color:#fff"><span class="c">條款</span></div>
 <div class="a" style="left:955px;top:5px;font-size:8px;line-height:11px;color:#fff">Cookie <span class="c">喜好設定</span></div>
</div>
<div id="zoombar" class="a">
<div class="a" style="left:18px;top:5px;width:7px;height:11px;background:#c8c8c8;border-radius:4px"></div><div class="a" style="left:21px;top:16px;width:1.5px;height:3px;background:#c8c8c8"></div><div class="a" style="left:12px;top:10px;width:20px;height:1.5px;background:#e04040;transform:rotate(-45deg)"></div>
<div class="a" style="left:-18px;top:23px;width:80px;text-align:center;font-size:9.5px;line-height:13px;color:#cfcfcf"><span class="c">解除靜音</span></div>
<div class="a" style="left:43px;top:9px;width:5px;height:5px;border-left:1.5px solid #bbb;border-top:1.5px solid #bbb;transform:rotate(45deg)"></div>
<div class="a" style="left:80px;top:6px;width:13px;height:11px;background:#c8c8c8;border-radius:2px"></div><div class="a" style="left:93px;top:8px;width:5px;height:7px;background:#c8c8c8;clip-path:polygon(0 50%,100% 0,100% 100%)"></div><div class="a" style="left:78px;top:11px;width:22px;height:1.5px;background:#e04040;transform:rotate(-40deg)"></div>
<div class="a" style="left:49px;top:23px;width:80px;text-align:center;font-size:9.5px;line-height:13px;color:#cfcfcf"><span class="c">開啟視訊</span></div>
<div class="a" style="left:114px;top:9px;width:5px;height:5px;border-left:1.5px solid #bbb;border-top:1.5px solid #bbb;transform:rotate(45deg)"></div>
<svg class="a" style="left:229px;top:4px" width="15" height="16" viewBox="0 0 15 16"><path d="M7.5 0.3 L14.2 2.8 V7.8 C14.2 11.8 11.2 14.6 7.5 15.7 C3.8 14.6 0.8 11.8 0.8 7.8 V2.8 Z" fill="#d4d4d4"/><path d="M7.5 2.2 L12.6 4 V8 H7.5 Z M7.5 8 V13.9 C4.9 13 2.7 11 2.4 8 Z" fill="#1a1a1a"/></svg>
<div class="a" style="left:196px;top:23px;width:80px;text-align:center;font-size:9.5px;line-height:13px;color:#cfcfcf"><span class="c">安全性</span></div>
<div class="a" style="left:303px;top:6px;width:7px;height:7px;border-radius:50%;background:#d0d0d0;box-shadow:9px 0 0 #d0d0d0"></div><div class="a" style="left:300px;top:13px;width:22px;height:6px;border-radius:5px 5px 1px 1px;background:#d0d0d0"></div>
<div class="a" style="left:325px;top:4px;font-size:9px;line-height:10px;color:#cfcfcf">45</div>
<div class="a" style="left:272px;top:23px;width:80px;text-align:center;font-size:9.5px;line-height:13px;color:#cfcfcf"><span class="c">與會者</span></div>
<div class="a" style="left:348px;top:9px;width:5px;height:5px;border-left:1.5px solid #bbb;border-top:1.5px solid #bbb;transform:rotate(45deg)"></div>
<div class="a" style="left:384px;top:5px;width:16px;height:11px;background:#d0d0d0;border-radius:2px"></div><div class="a" style="left:386px;top:15px;width:5px;height:4px;background:#d0d0d0;clip-path:polygon(0 0,100% 0,0 100%)"></div>
<div class="a" style="left:352px;top:23px;width:80px;text-align:center;font-size:9.5px;line-height:13px;color:#cfcfcf"><span class="c">聊天</span></div>
<div class="a" style="left:413px;top:9px;width:5px;height:5px;border-left:1.5px solid #bbb;border-top:1.5px solid #bbb;transform:rotate(45deg)"></div>
<div class="a" style="left:451px;top:5px;width:19px;height:14px;background:#23d959;border-radius:3px"></div><div class="a" style="left:459px;top:9px;width:2px;height:7px;background:#111"></div><div class="a" style="left:457px;top:8px;border-left:3px solid transparent;border-right:3px solid transparent;border-bottom:3px solid #111"></div>
<div class="a" style="left:420px;top:23px;width:80px;text-align:center;font-size:9.5px;line-height:13px;color:#29d65f"><span class="c">分享畫面</span></div>
<div class="a" style="left:485px;top:9px;width:5px;height:5px;border-left:1.5px solid #bbb;border-top:1.5px solid #bbb;transform:rotate(45deg)"></div>
<div class="a" style="left:519px;top:5px;width:13px;height:13px;background:#d0d0d0;border-radius:2px"></div><div class="a" style="left:535px;top:5px;width:13px;height:13px;background:#d0d0d0;border-radius:2px"></div><div class="a" style="left:523px;top:9px;width:2px;height:5px;background:#1a1a1a;box-shadow:3px 0 0 #1a1a1a"></div><div class="a" style="left:539px;top:9px;width:5px;height:5px;background:#1a1a1a"></div>
<div class="a" style="left:493px;top:23px;width:80px;text-align:center;font-size:9.5px;line-height:13px;color:#cfcfcf"><span class="c">暫停</span>/<span class="c">停止錄製</span></div>
<div class="a" style="left:596px;top:4px;width:6px;height:6px;background:#d0d0d0;border-radius:1px;box-shadow:8px 0 0 #d0d0d0,0 8px 0 #d0d0d0,8px 8px 0 #d0d0d0"></div>
<div class="a" style="left:563px;top:23px;width:80px;text-align:center;font-size:9.5px;line-height:13px;color:#cfcfcf"><span class="c">分組討論</span></div>
<div class="a" style="left:652px;top:6px;width:16px;height:12px;border:1.5px solid #d0d0d0;border-radius:2px"></div>
<div class="a" style="left:620px;top:23px;width:80px;text-align:center;font-size:9.5px;line-height:13px;color:#cfcfcf"><span class="c">技術支援</span></div>
<div class="a" style="left:711px;top:5px;width:14px;height:14px;background:#d0d0d0;border-radius:50%"></div><div class="a" style="left:715px;top:9px;width:2px;height:2px;background:#1a1a1a;border-radius:50%;box-shadow:4px 0 0 #1a1a1a"></div><div class="a" style="left:714.5px;top:11px;width:7px;height:4px;border-bottom:1.5px solid #1a1a1a;border-radius:0 0 4px 4px"></div><div class="a" style="left:723px;top:2px;font-size:8px;line-height:8px;color:#d0d0d0">+</div>
<div class="a" style="left:678px;top:23px;width:80px;text-align:center;font-size:9.5px;line-height:13px;color:#cfcfcf"><span class="c">回應</span></div>
<div class="a" style="left:770px;top:6px;width:13px;height:12px;border:1.5px dashed #d0d0d0;border-radius:3px"></div>
<div class="a" style="left:737px;top:23px;width:80px;text-align:center;font-size:9.5px;line-height:13px;color:#cfcfcf"><span class="c">應用程式</span></div>
<div class="a" style="left:797px;top:9px;width:5px;height:5px;border-left:1.5px solid #bbb;border-top:1.5px solid #bbb;transform:rotate(45deg)"></div>
<div class="a" style="left:835px;top:5px;width:16px;height:12px;border:1.5px solid #d0d0d0;border-radius:2px"></div>
<div class="a" style="left:803px;top:23px;width:80px;text-align:center;font-size:9.5px;line-height:13px;color:#cfcfcf"><span class="c">白板</span></div>
<div class="a" style="left:868px;top:9px;width:5px;height:5px;border-left:1.5px solid #bbb;border-top:1.5px solid #bbb;transform:rotate(45deg)"></div>
<div class="a" style="left:980px;top:10px;width:44px;height:20px;background:#d8322c;border-radius:6px"></div>
<div class="a" style="left:991px;top:13px;font-size:10px;line-height:13px;color:#fff;font-weight:bold"><span class="c">結束</span></div>
</div>
</body></html>
